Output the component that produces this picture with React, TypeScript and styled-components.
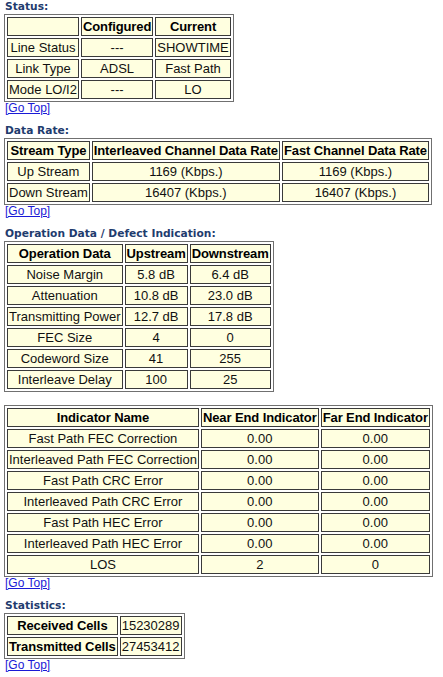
import React from "react";
import styled, { createGlobalStyle } from "styled-components";

const Global = createGlobalStyle`
  html, body { margin: 0; padding: 0; background: #ffffff; }
  body { padding: 1px 4px 0 4px; font-family: "Liberation Sans", Arial, sans-serif; }
`;

const Page = styled.div`
  display: flex;
  flex-direction: column;
  align-items: flex-start;
`;

const Heading = styled.div<{ $first?: boolean }>`
  font-family: "DejaVu Sans", Verdana, sans-serif;
  font-weight: bold;
  font-size: 10.67px;
  line-height: 12px;
  height: 12px;
  color: #1f3c6e;
  padding-left: 1px;
  margin-top: ${(p) => (p.$first ? "0" : "10px")};
`;

const Table = styled.table<{ $gapTop?: boolean }>`
  border-collapse: separate;
  border-spacing: 2px;
  border: 1px solid #707070;
  margin-top: ${(p) => (p.$gapTop ? "13px" : "1px")};
  font-family: "Liberation Sans", Arial, sans-serif;
  font-size: 13px;
  color: #111;
`;

const Th = styled.th`
  border: 1px solid #3a3a3a;
  background: #ffffe0;
  padding: 1px 1px;
  line-height: 15px;
  font-weight: bold;
  letter-spacing: -0.1px;
  text-align: center;
  white-space: nowrap;
  color: #000;
`;

const Td = styled.td<{ $left?: boolean }>`
  border: 1px solid #3a3a3a;
  background: #ffffe0;
  padding: 1px 1px;
  line-height: 15px;
  text-align: ${(p) => (p.$left ? "left" : "center")};
  white-space: nowrap;
`;

const GoTop = styled.a`
  display: block;
  font-family: "Liberation Sans", Arial, sans-serif;
  font-size: 12px;
  line-height: 13px;
  height: 13px;
  color: #1a1ad6;
  text-decoration: underline;
  padding-left: 1px;
`;

type Row = string[];

const GridTable: React.FC<{ head: Row; rows: Row[]; gapTop?: boolean }> = ({ head, rows, gapTop }) => (
  <Table $gapTop={gapTop}>
    <tbody>
      <tr>
        {head.map((h, i) => (
          <Th key={i}>{h}</Th>
        ))}
      </tr>
      {rows.map((r, ri) => (
        <tr key={ri}>
          {r.map((c, ci) => (
            <Td key={ci}>{c}</Td>
          ))}
        </tr>
      ))}
    </tbody>
  </Table>
);

const status: Row[] = [
  ["Line Status", "---", "SHOWTIME"],
  ["Link Type", "ADSL", "Fast Path"],
  ["Mode LO/I2", "---", "LO"],
];

const rate: Row[] = [
  ["Up Stream", "1169 (Kbps.)", "1169 (Kbps.)"],
  ["Down Stream", "16407 (Kbps.)", "16407 (Kbps.)"],
];

const op: Row[] = [
  ["Noise Margin", "5.8 dB", "6.4 dB"],
  ["Attenuation", "10.8 dB", "23.0 dB"],
  ["Transmitting Power", "12.7 dB", "17.8 dB"],
  ["FEC Size", "4", "0"],
  ["Codeword Size", "41", "255"],
  ["Interleave Delay", "100", "25"],
];

const ind: Row[] = [
  ["Fast Path FEC Correction", "0.00", "0.00"],
  ["Interleaved Path FEC Correction", "0.00", "0.00"],
  ["Fast Path CRC Error", "0.00", "0.00"],
  ["Interleaved Path CRC Error", "0.00", "0.00"],
  ["Fast Path HEC Error", "0.00", "0.00"],
  ["Interleaved Path HEC Error", "0.00", "0.00"],
  ["LOS", "2", "0"],
];

export default function App() {
  return (
    <>
      <Global />
      <Page>
        <Heading $first>Status:</Heading>
        <GridTable head={["", "Configured", "Current"]} rows={status} />
        <GoTop href="#">[Go Top]</GoTop>

        <Heading>Data Rate:</Heading>
        <GridTable
          head={["Stream Type", "Interleaved Channel Data Rate", "Fast Channel Data Rate"]}
          rows={rate}
        />
        <GoTop href="#">[Go Top]</GoTop>

        <Heading>Operation Data / Defect Indication:</Heading>
        <GridTable head={["Operation Data", "Upstream", "Downstream"]} rows={op} />
        <GridTable
          gapTop
          head={["Indicator Name", "Near End Indicator", "Far End Indicator"]}
          rows={ind}
        />
        <GoTop href="#">[Go Top]</GoTop>

        <Heading>Statistics:</Heading>
        <Table>
          <tbody>
            <tr>
              <Th>Received Cells</Th>
              <Td $left>15230289</Td>
            </tr>
            <tr>
              <Th>Transmitted Cells</Th>
              <Td $left>27453412</Td>
            </tr>
          </tbody>
        </Table>
        <GoTop href="#">[Go Top]</GoTop>
      </Page>
    </>
  );
}
